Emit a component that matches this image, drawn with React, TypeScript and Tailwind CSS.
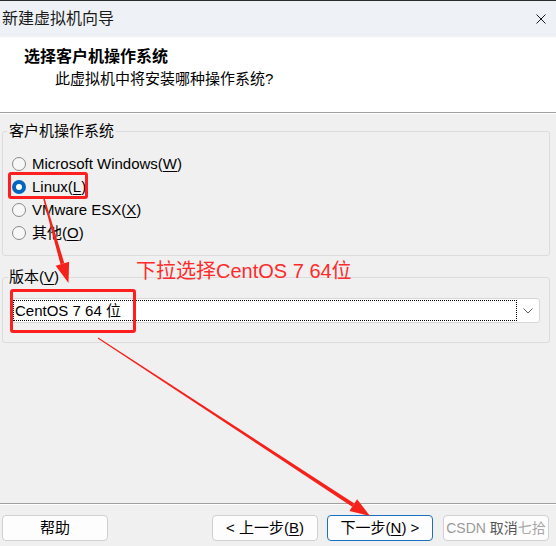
import React from 'react';

const Radio = ({ pre, mn, post, checked }: { pre: string; mn: string; post: string; checked?: boolean }) => (
  <div className="flex h-[23px] items-center gap-[6px]">
    {checked ? (
      <span className="flex h-[14px] w-[14px] items-center justify-center rounded-full bg-[#0067c0]">
        <span className="h-[6px] w-[6px] rounded-full bg-white" />
      </span>
    ) : (
      <span className="h-[14px] w-[14px] rounded-full border border-[#8a8a8a] bg-[#f7f7f7]" />
    )}
    <span className="text-[15px] leading-[20px] text-black">
      {pre}
      <span className="underline underline-offset-2">{mn}</span>
      {post}
    </span>
  </div>
);

const Button = ({ children, primary }: { children: React.ReactNode; primary?: boolean }) => (
  <div
    className={`flex h-[26px] w-[106px] items-center justify-center whitespace-nowrap rounded-[4px] border bg-[#fdfdfd] text-[15px] leading-[20px] text-black ${
      primary ? 'border-[#1a6fc4]' : 'border-[#d0d0d0]'
    }`}
  >
    {children}
  </div>
);

export default function App() {
  return (
    <div className="relative flex h-[546px] w-[556px] flex-col overflow-hidden bg-[#f0f0f0] font-['Liberation_Sans','Noto_Sans_CJK_SC',sans-serif] text-black">
      {/* title bar */}
      <div className="flex h-[37px] items-center justify-between border-t border-[#2b2b2b] bg-[#eef2f6] pl-[2px] pr-[10px]">
        <span className="text-[16px] leading-[22px] text-[#1a1a1a]">新建虚拟机向导</span>
        <svg width="10" height="10" viewBox="0 0 10 10">
          <path d="M0.5 0.5 L9.5 9.5 M9.5 0.5 L0.5 9.5" stroke="#1a1a1a" strokeWidth="1" />
        </svg>
      </div>

      {/* header */}
      <div className="h-[75px] bg-white pt-[9px]">
        <div className="pl-[24px] text-[16px] font-bold leading-[22px]">选择客户机操作系统</div>
        <div className="pl-[55px] text-[15px] leading-[22px]">此虚拟机中将安装哪种操作系统?</div>
      </div>
      <div className="border-t border-b border-t-[#a0a0a0] border-b-white" />

      {/* body */}
      <div className="flex-1">
        <fieldset className="ml-[2px] mr-[6px] mt-[7px] rounded-[3px] border border-[#dcdcdc] px-[9px] pb-[11px]">
          <legend className="-ml-[5px] px-[2px] text-[15px] leading-[20px]">客户机操作系统</legend>
          <div className="pt-[11px]">
            <Radio pre="Microsoft Windows(" mn="W" post=")" />
            <Radio pre="Linux(" mn="L" post=")" checked />
            <Radio pre="VMware ESX(" mn="X" post=")" />
            <Radio pre="其他(" mn="O" post=")" />
          </div>
        </fieldset>

        <fieldset className="ml-[2px] mr-[6px] mt-[11px] rounded-[3px] border border-[#dcdcdc] px-[9px] pb-[19px]">
          <legend className="-ml-[4px] px-[1px] text-[15px] leading-[20px]">
            版本(<span className="underline underline-offset-2">V</span>)
          </legend>
          <div className="mt-[11px] flex h-[25px] items-center rounded-[3px] border border-[#d6d6d6] bg-white">
            <div className="flex h-[21px] flex-1 items-center border border-dotted border-black pl-[1px] text-[15px] leading-[20px]">
              CentOS 7 64 位
            </div>
            <div className="flex w-[22px] items-center justify-center">
              <svg width="10" height="6" viewBox="0 0 10 6">
                <path d="M0.5 0.5 L5 5 L9.5 0.5" fill="none" stroke="#606060" strokeWidth="1" />
              </svg>
            </div>
          </div>
        </fieldset>
      </div>

      {/* footer */}
      <div className="border-t border-b border-t-[#a0a0a0] border-b-white" />
      <div className="flex justify-between pb-[5px] pl-[2px] pr-[7px] pt-[10px]">
        <div className="w-[105px]">
          <Button>帮助</Button>
        </div>
        <div className="flex gap-[9px]">
          <Button>
            &lt; 上一步(<span className="underline underline-offset-2">B</span>)
          </Button>
          <Button primary>
            下一步(<span className="underline underline-offset-2">N</span>) &gt;
          </Button>
          <div className="ml-[1px]">
            <Button>
              <span className="text-[14px]">
                <span className="text-[#9a9a9a]">CSDN </span>
                <span className="text-[#555555]">取消</span>
                <span className="text-[#a8a8a8]">七拾</span>
              </span>
            </Button>
          </div>
        </div>
      </div>

      {/* annotations */}
      <div className="absolute left-[8px] top-[172px] h-[27px] w-[80px] rounded-[3px] border-[3px] border-[#ff1f1f]" />
      <div className="absolute left-[10px] top-[289px] h-[44px] w-[126px] rounded-[3px] border-[3px] border-[#ff1f1f]" />
      <div className="absolute left-[136px] top-[258px] text-[20px] leading-[26px] text-[#ff2a2a]">下拉选择CentOS 7 64位</div>
      <svg className="pointer-events-none absolute left-0 top-0" width="556" height="546" viewBox="0 0 556 546">
        <polygon points="43.28,199.21 44.72,198.79 64.32,263.24 60.48,264.36" fill="#f5221b" />
        <polygon points="68.5,283 55.67,265.75 69.13,261.85" fill="#f5221b" />
        <polygon points="97.73,338.42 98.27,337.58 354.37,503.38 352.18,506.72" fill="#f5221b" />
        <polygon points="370,516 349.44,510.91 357.1,499.19" fill="#f5221b" />
      </svg>
    </div>
  );
}
